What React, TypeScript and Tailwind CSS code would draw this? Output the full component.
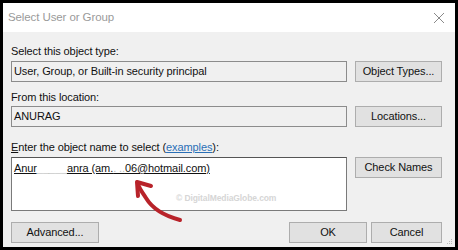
import React from "react";

const font = "font-['Segoe_UI','Liberation_Sans',Arial,sans-serif]";

function Btn({ children, w }: { children: React.ReactNode; w: string }) {
  return (
    <div
      className={`${w} h-[21px] shrink-0 flex items-center justify-center bg-[#e1e1e1] border border-[#adadad] text-[11px] tracking-[-0.1px] text-[#111]`}
    >
      {children}
    </div>
  );
}

export default function App() {
  return (
    <div className={`w-[458px] h-[250px] bg-black p-[3px] ${font}`}>
      <div className="relative w-full h-full flex flex-col bg-[#f0f0f0]">
        {/* title bar */}
        <div className="h-[29px] shrink-0 bg-white flex items-center justify-between pl-[5px] pr-[9px]">
          <span className="text-[11.5px] tracking-[-0.1px] text-[#9a9a9a]">Select User or Group</span>
          <svg width="12" height="12" viewBox="0 0 12 12" className="mr-[1px]">
            <path d="M1 1 L11 11 M11 1 L1 11" stroke="#8a8a8a" strokeWidth="1" fill="none" />
          </svg>
        </div>

        <div className="flex flex-col pl-[8px] pr-[13px] text-[11px] tracking-[-0.1px] text-[#111]">
          <div className="mt-[12px] h-[15px] leading-[15px]">Select this object type:</div>
          <div className="mt-[2px] flex gap-[8px]">
            <div className="flex-1 h-[21px] border border-[#8c8c8c] bg-[#f0f0f0] flex items-center pl-[2px]">
              User, Group, or Built-in security principal
            </div>
            <Btn w="w-[87px]">Object Types...</Btn>
          </div>

          <div className="mt-[8px] h-[15px] leading-[15px]">From this location:</div>
          <div className="mt-[1px] flex gap-[8px]">
            <div className="flex-1 h-[21px] border border-[#8c8c8c] bg-[#f0f0f0] flex items-center pl-[2px]">
              ANURAG
            </div>
            <Btn w="w-[87px]">Locations...</Btn>
          </div>

          <div className="mt-[13px] h-[15px] leading-[15px]">
            <span className="underline">E</span>nter the object name to select (
            <span className="text-[#2a6fb6] underline">examples</span>):
          </div>
          <div className="mt-[2px] flex gap-[8px] items-start">
            <div className="relative flex-1 h-[54px] bg-white border border-[#7a7a7a] border-t-[#555] pl-[2px] pt-[2px]">
              <span className="underline leading-[15px]">
                Anur<span className="text-white">_____</span>anra (am.<span className="text-[#bbb]">. ..</span>06@hotmail.com)
              </span>
              <span className="absolute left-[164px] top-[34px] text-[8.5px] text-[#d6d6d6] font-bold">
                © DigitalMediaGlobe.com
              </span>
            </div>
            <Btn w="w-[87px]">Check Names</Btn>
          </div>

          <div className="mt-[11px] flex items-center">
            <Btn w="w-[88px]">Advanced...</Btn>
            <div className="flex-1" />
            <div className="flex gap-[4px]">
              <Btn w="w-[78px]">OK</Btn>
              <Btn w="w-[71px]">Cancel</Btn>
            </div>
          </div>
        </div>

        {/* red arrow overlay */}
        <svg
          className="absolute left-0 top-0 pointer-events-none"
          width="452"
          height="244"
          viewBox="3 3 452 244"
        >
          <path
            d="M180 220 C165 216 152 208 146 198 C142 192 139 188 138 184"
            stroke="#b8232a"
            strokeWidth="4"
            fill="none"
            strokeLinecap="round"
          />
          <path
            d="M151 186 L137 182 L138 196"
            stroke="#b8232a"
            strokeWidth="4"
            fill="none"
            strokeLinecap="round"
            strokeLinejoin="round"
          />
        </svg>

        {/* resize grip */}
        <svg className="absolute right-[2px] bottom-[2px]" width="6" height="6" viewBox="0 0 6 6">
          <rect x="4" y="0" width="1" height="1" fill="#bbb" />
          <rect x="2" y="2" width="1" height="1" fill="#bbb" />
          <rect x="4" y="2" width="1" height="1" fill="#bbb" />
          <rect x="0" y="4" width="1" height="1" fill="#bbb" />
          <rect x="2" y="4" width="1" height="1" fill="#bbb" />
          <rect x="4" y="4" width="1" height="1" fill="#bbb" />
        </svg>
      </div>
    </div>
  );
}
